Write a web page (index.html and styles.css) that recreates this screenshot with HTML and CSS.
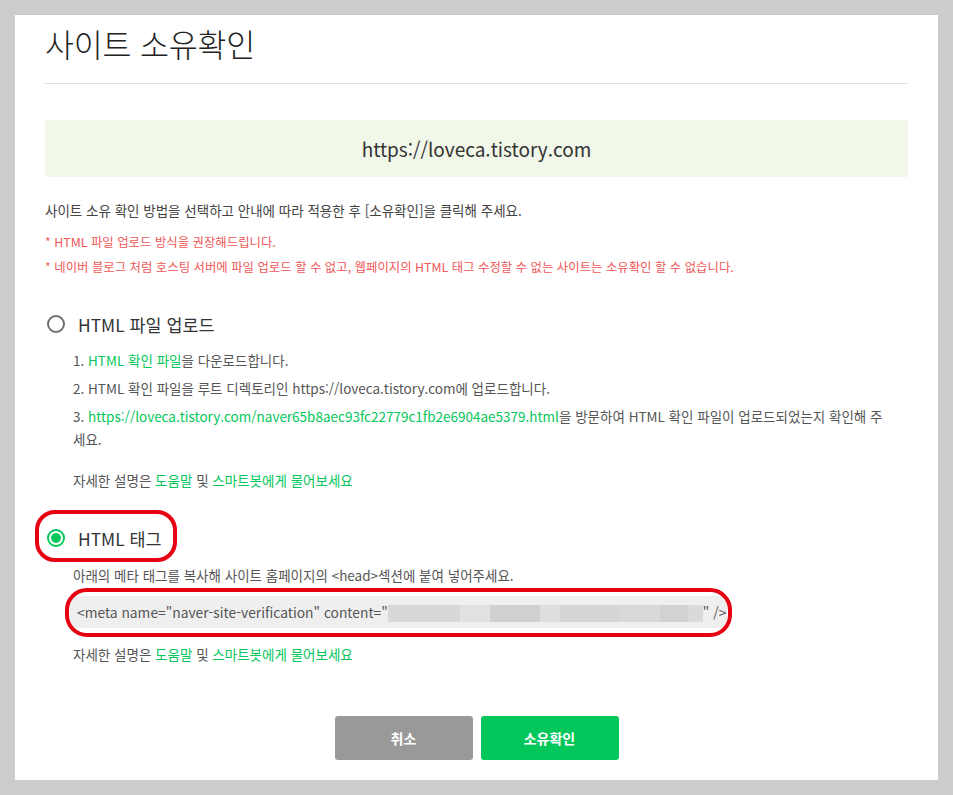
FILE: index.html
```html
<!DOCTYPE html>
<html lang="ko">
<head>
<meta charset="utf-8">
<title>사이트 소유확인</title>
<link rel="stylesheet" href="styles.css">
</head>
<body>
<div class="panel">
  <div class="header"><h1 class="title">사이트 소유확인</h1></div>
  <div class="site-url">https://loveca.tistory.com</div>
  <p class="desc">사이트 소유 확인 방법을 선택하고 안내에 따라 적용한 후 [소유확인]을 클릭해 주세요.</p>
  <p class="warn warn-first">* HTML 파일 업로드 방식을 권장해드립니다.</p>
  <p class="warn">* 네이버 블로그 처럼 호스팅 서버에 파일 업로드 할 수 없고, 웹페이지의 HTML 태그 수정할 수 없는 사이트는 소유확인 할 수 없습니다.</p>

  <div class="option option-first">
    <div class="radio-row">
      <span class="radio"></span><span class="radio-label">HTML 파일 업로드</span>
    </div>
    <ol class="steps">
      <li><a class="link">HTML 확인 파일</a>을 다운로드합니다.</li>
      <li>HTML 확인 파일을 루트 디렉토리인 https://loveca.tistory.com에 업로드합니다.</li>
      <li><a class="link">https://loveca.tistory.com/naver65b8aec93fc22779c1fb2e6904ae5379.html</a>을 방문하여 HTML 확인 파일이 업로드되었는지 확인해 주<br>세요.</li>
    </ol>
    <p class="help">자세한 설명은 <a class="link">도움말</a> 및 <a class="link">스마트봇에게 물어보세요</a></p>
  </div>

  <div class="option option-second">
    <div class="radio-row">
      <span class="radio radio-on"></span><span class="radio-label">HTML 태그</span>
      <span class="mark mark-radio"></span>
    </div>
    <p class="sub">아래의 메타 태그를 복사해 사이트 홈페이지의 &lt;head&gt;섹션에 붙여 넣어주세요.</p>
    <div class="meta-wrap">
      <div class="meta-box">&lt;meta name="naver-site-verification" content="<span class="blur"></span>" /&gt;</div>
      <span class="mark mark-meta"></span>
    </div>
    <p class="help help-second">자세한 설명은 <a class="link">도움말</a> 및 <a class="link">스마트봇에게 물어보세요</a></p>
  </div>

  <div class="actions">
    <button class="btn btn-cancel" type="button">취소</button>
    <button class="btn btn-ok" type="button">소유확인</button>
  </div>
</div>
</body>
</html>
```

FILE: styles.css
```css
* { box-sizing: border-box; }
html, body { margin: 0; padding: 0; }
body {
  background: #cccccc;
  padding: 15px;
  font-family: "Noto Sans CJK KR", "Noto Sans", sans-serif;
  color: #444;
}
.panel {
  background: #fff;
  width: 923px;
  height: 765px;
  padding: 0 30px;
}
.header {
  padding-top: 8px;
  padding-bottom: 20px;
  border-bottom: 1px solid #e1e1e1;
}
.title {
  margin: 0;
  font-size: 31.5px;
  line-height: 40px;
  font-weight: 300;
  color: #222;
  letter-spacing: -0.2px;
}
.site-url {
  margin-top: 36px;
  height: 57px;
  line-height: 57px;
  background: #f1f7e9;
  text-align: center;
  font-size: 19px;
  color: #333;
}
.desc {
  margin: 23px 0 0;
  font-size: 13.5px;
  line-height: 20px;
  color: #444;
}
.warn {
  margin: 0;
  font-size: 12.4px;
  line-height: 25px;
  color: #ef5757;
}
.warn-first { margin-top: 10px; }
.option-first { margin-top: 29px; }
.option-second { margin-top: 31px; }
.radio-row {
  position: relative;
  height: 30px;
  display: flex;
  align-items: center;
  padding-left: 2px;
}
.radio {
  width: 18px;
  height: 18px;
  border: 2px solid #6f6f6f;
  border-radius: 50%;
  flex: none;
  display: flex;
  align-items: center;
  justify-content: center;
}
.radio-on { border-color: #03c75a; }
.radio-on::after {
  content: "";
  width: 10px;
  height: 10px;
  border-radius: 50%;
  background: #03c75a;
}
.radio-label {
  margin-left: 13px;
  font-size: 17.4px;
  color: #333;
}
.steps {
  margin: 10px 0 0;
  padding: 0 0 0 28px;
  list-style: decimal inside;
  font-size: 13.5px;
  line-height: 23px;
  color: #555;
}
.steps li + li { margin-top: 5px; }
.link { color: #03c75a; text-decoration: none; }
.help {
  margin: 18px 0 0;
  padding-left: 28px;
  font-size: 13.5px;
  line-height: 23px;
  color: #555;
}
.help-second { margin-top: 15px; }
.sub {
  margin: 11px 0 0;
  padding-left: 28px;
  font-size: 13.5px;
  line-height: 23px;
  color: #555;
}
.meta-wrap {
  position: relative;
  margin: 9px 0 0 25px;
  width: 657px;
}
.meta-box {
  height: 32px;
  line-height: 32px;
  background: #efefef;
  border-radius: 6px;
  padding-left: 7px;
  font-size: 13.8px;
  color: #555;
  white-space: nowrap;
}
.blur {
  display: inline-block;
  width: 315px;
  height: 17px;
  vertical-align: middle;
  margin-top: -2px;
  background: linear-gradient(90deg,
    #d8d8d8 0 72px, #e1e1e1 72px 102px, #d0d0d0 102px 152px,
    #dedede 152px 172px, #d5d5d5 172px 232px, #d9d9d9 232px 272px,
    #d2d2d2 272px 300px, #dadada 300px 315px);
}
.mark {
  position: absolute;
  border: 4px solid #e60012;
  pointer-events: none;
}
.mark-radio {
  left: -10px;
  top: -13px;
  width: 142px;
  height: 52px;
  border-radius: 20px;
}
.mark-meta {
  left: -5px;
  top: -8px;
  width: 667px;
  height: 49px;
  border-radius: 22px;
}
.actions {
  margin-top: 50px;
  display: flex;
  justify-content: center;
  gap: 8px;
}
.btn {
  width: 138px;
  height: 44px;
  border: 0;
  border-radius: 3px;
  color: #fff;
  font-family: "Noto Sans CJK KR", "Noto Sans", sans-serif;
  font-size: 14px;
  font-weight: 700;
  cursor: pointer;
}
.btn-cancel { background: #999999; }
.btn-ok { background: #03c75a; }
```
